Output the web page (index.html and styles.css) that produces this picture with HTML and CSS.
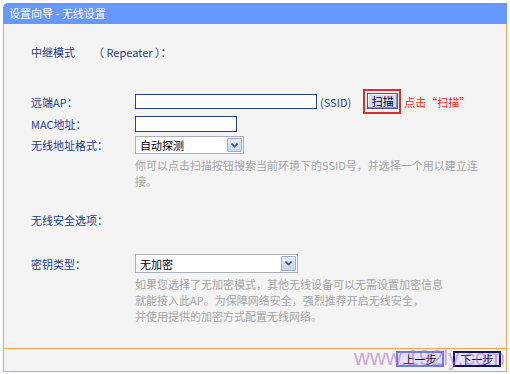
FILE: index.html
```html
<!DOCTYPE html>
<html lang="zh-CN">
<head>
<meta charset="utf-8">
<title>设置向导 - 无线设置</title>
<link rel="stylesheet" href="styles.css">
</head>
<body>
<div class="panel">
  <div class="titlebar">设置向导 - 无线设置</div>
  <div class="content">
    <div class="row mode">
      <span class="mode-label">中继模式</span><span class="mode-name">（ Repeater ）：</span>
    </div>
    <div class="row r-ap">
      <span class="label">远端AP：</span>
      <span class="input in-ap"></span>
      <span class="ssid">(SSID)</span>
      <span class="scan-wrap"><span class="btn scan">扫描</span></span>
      <span class="hint">点击“扫描”</span>
    </div>
    <div class="row r-mac">
      <span class="label">MAC地址：</span>
      <span class="input in-mac"></span>
    </div>
    <div class="row r-fmt">
      <span class="label">无线地址格式：</span>
      <div class="select sel-fmt">
        <span class="sel-text">自动探测</span>
        <span class="sel-arrow"><svg width="7" height="5" viewBox="0 0 7 5"><path d="M0.5 0.5 L3.5 3.5 L6.5 0.5" fill="none" stroke="#3d4f78" stroke-width="1.6"/></svg></span>
      </div>
    </div>
    <p class="help help-1">你可以点击扫描按钮搜索当前环境下的SSID号，并选择一个用以建立连<br>接。</p>
    <div class="row r-sec">
      <span class="label">无线安全选项：</span>
    </div>
    <div class="row r-key">
      <span class="label">密钥类型：</span>
      <div class="select sel-key">
        <span class="sel-text">无加密</span>
        <span class="sel-arrow"><svg width="7" height="5" viewBox="0 0 7 5"><path d="M0.5 0.5 L3.5 3.5 L6.5 0.5" fill="none" stroke="#3d4f78" stroke-width="1.6"/></svg></span>
      </div>
    </div>
    <p class="help help-2">如果您选择了无加密模式，其他无线设备可以无需设置加密信息<br>就能接入此AP。为保障网络安全，强烈推荐开启无线安全，<br>并使用提供的加密方式配置无线网络。</p>
  </div>
  <div class="footer">
    <span class="btn nav prev">上一步</span>
    <span class="btn nav next">下一步</span>
  </div>
  <div class="watermark">www.192ly.com</div>
</div>
</body>
</html>
```
FILE: styles.css
```css
html, body {
  margin: 0;
  padding: 0;
  background: #ffffff;
}
body {
  font-family: "Noto Sans CJK SC", "Liberation Sans", sans-serif;
  font-size: 11px;
  color: #1e3a8c;
}
.panel {
  position: relative;
  margin: 3px 0 0 3px;
  width: 504px;
}
.titlebar {
  height: 21px;
  line-height: 21px;
  background: #6699ff;
  color: #ffffff;
  border-top-left-radius: 5px;
  padding-left: 6px;
  font-size: 11px;
}
.content {
  box-sizing: border-box;
  height: 324px;
  background: #f4f4f4;
  border-left: 1px solid #ffa14f;
  border-right: 1px solid #ffa14f;
  padding: 20px 0 0 27px;
}
.row {
  display: flex;
  align-items: center;
}
.label {
  width: 104px;
  flex: none;
}
.mode {
  height: 16px;
  line-height: 16px;
}
.mode-name {
  margin-left: 18px;
}
.r-ap {
  margin-top: 29px;
  height: 25px;
}
.input {
  box-sizing: border-box;
  display: block;
  background: #ffffff;
  border: 1px solid #27408b;
}
.in-ap {
  width: 182px;
  height: 15px;
}
.ssid {
  margin-left: 3px;
  color: #27408b;
}
.scan-wrap {
  margin-left: 12px;
  box-sizing: border-box;
  width: 38px;
  height: 25px;
  border: 2px solid #e42a2a;
  padding: 2px 1px 2px 2px;
}
.btn {
  box-sizing: border-box;
  display: flex;
  align-items: center;
  justify-content: center;
  color: #000000;
  background: #dcdcfa;
}
.scan {
  width: 31px;
  height: 16px;
  border: 1px solid #4a5890;
  box-shadow: inset -1px -1px 0 #8a92c0, inset 1px 1px 0 #f4f4ff;
  background: #d6d8f6;
}
.hint {
  margin-left: 3px;
  color: #ff1a1a;
}
.r-mac {
  margin-top: 1px;
  height: 18px;
}
.in-mac {
  width: 102px;
  height: 16px;
}
.r-fmt {
  margin-top: 3px;
  height: 18px;
}
.select {
  box-sizing: border-box;
  display: flex;
  align-items: center;
  justify-content: space-between;
  background: #ffffff;
  border: 1px solid #aab0b8;
  color: #000000;
  padding-left: 4px;
  padding-right: 1px;
}
.sel-fmt {
  width: 109px;
  height: 18px;
}
.sel-key {
  width: 163px;
  height: 19px;
}
.sel-text {
  line-height: 14px;
}
.sel-arrow {
  box-sizing: border-box;
  display: flex;
  align-items: center;
  justify-content: center;
  width: 15px;
  height: calc(100% - 2px);
  border: 1px solid #98aed6;
  border-radius: 1px;
  background: linear-gradient(#e4ecf8, #c6d6ee);
}
.help {
  margin: 3px 0 0 104px;
  line-height: 16px;
  color: #a6a6a6;
}
.r-sec {
  margin-top: 23px;
  height: 16px;
}
.r-key {
  margin-top: 26px;
  height: 19px;
}
.footer {
  box-sizing: border-box;
  height: 24px;
  background: #f4f4f4;
  border: 1px solid #ffa14f;
  display: flex;
  justify-content: flex-end;
  align-items: flex-start;
  gap: 9px;
  padding: 2px 5px 0 0;
}
.nav {
  width: 48px;
  height: 16px;
  background: #e2e2fe;
}
.prev {
  border: 2px solid #6a7ee0;
}
.next {
  border: 2px solid #12125e;
}
.watermark {
  position: absolute;
  left: 351px;
  top: 344px;
  font-family: "Liberation Sans", sans-serif;
  font-size: 22px;
  line-height: 21px;
  color: rgba(176, 100, 196, 0.55);
  white-space: nowrap;
  pointer-events: none;
}
```
